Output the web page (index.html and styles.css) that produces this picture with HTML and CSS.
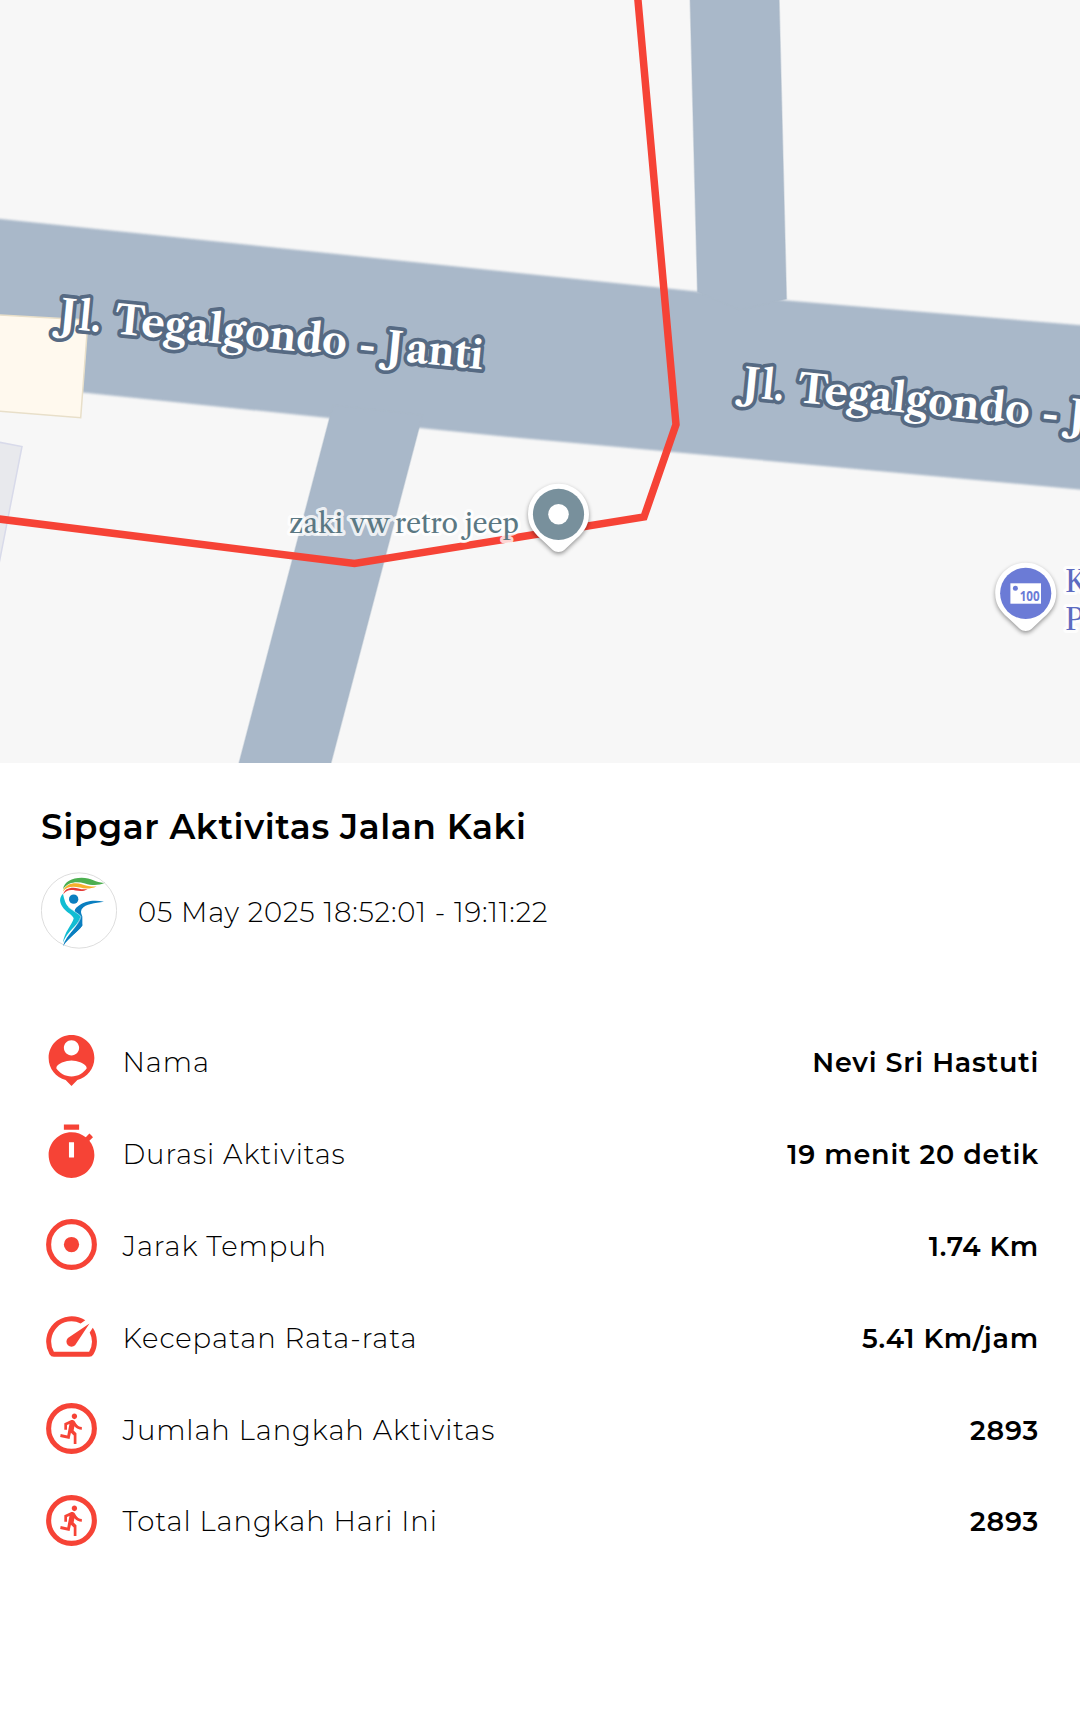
FILE: index.html
```html
<!DOCTYPE html>
<html lang="id">
<head>
    <meta charset="UTF-8">
    <meta name="viewport" content="width=device-width, initial-scale=1.0">
    <title>Sipgar Aktivitas Jalan Kaki</title>
    <link rel="stylesheet" href="styles.css">
</head>
<body>
    <svg class="map" viewBox="0 0 1080 763" width="1080" height="763">
        <defs>
            <g id="streetName">
                <text class="street" transform="rotate(5.6)"><tspan x="-1">J</tspan><tspan x="18" textLength="22" lengthAdjust="spacingAndGlyphs">l.</tspan> <tspan x="54" textLength="233" lengthAdjust="spacingAndGlyphs">Tegalgondo</tspan> <tspan x="299">-</tspan> <tspan x="327">J</tspan><tspan x="347" textLength="77" lengthAdjust="spacingAndGlyphs">anti</tspan></text>
            </g>
            <path id="pin" d="M0 -30.5C-17 -30.5 -30.5 -17 -30.5 0C-30.5 13 -23 20 -15 27L-6 35.5C-2.5 38.5 2.5 38.5 6 35.5L15 27C23 20 30.5 13 30.5 0C30.5 -17 17 -30.5 0 -30.5Z"/>
        </defs>

        <!-- Jalan -->
        <path class="road-edge" d="M-10 218L697 291.5L787 300.5L1090 326V490.5L520 438L420 428L329 418L-10 383Z"/>
        <path class="road" d="M690 -5L697.5 292L740 310L786.5 299L779 -5Z"/>
        <path class="road" d="M333 405L239 763H331L422.5 415Z"/>

        <!-- Bangunan -->
        <path class="building" d="M-2 315L88 320L80.7 417.7L-2 411Z"/>
        <path class="building-grey" d="M-2 442L22 446.5L-2 569Z"/>

        <!-- Rute -->
        <polyline class="route" points="-5,518.5 354.5,563.5 644,517 676,424.5 637.5,-5"/>

        <use href="#streetName" x="60" y="328"/>
        <use href="#streetName" x="743" y="396.7"/>

        <text class="poi" y="532.5"><tspan x="289" textLength="54" lengthAdjust="spacingAndGlyphs">zaki</tspan> <tspan x="350" textLength="39" lengthAdjust="spacingAndGlyphs">vw</tspan> <tspan x="395" textLength="63" lengthAdjust="spacingAndGlyphs">retro</tspan> <tspan x="465" textLength="54" lengthAdjust="spacingAndGlyphs">jeep</tspan></text>
        <g transform="translate(558.5 514.3)">
            <use href="#pin" class="pin"/>
            <circle r="25.6" fill="#78909c"/>
            <circle r="10.3" fill="#fff"/>
        </g>

        <g transform="translate(1025.7 593.3)">
            <use href="#pin" class="pin"/>
            <circle r="25.6" fill="#6b7bd6"/>
            <rect x="-15.3" y="-10" width="30.6" height="20.4" fill="#fff"/>
            <circle cx="-10.3" cy="-5" r="2.5" fill="#6b7bd6"/>
            <text class="money" x="-6" y="8" textLength="20" lengthAdjust="spacingAndGlyphs">100</text>
        </g>
        <text class="poi poi-blue" x="1065" y="592">K</text>
        <text class="poi poi-blue" x="1065" y="630">P</text>
    </svg>

    <div class="container">
        <h2>Sipgar Aktivitas Jalan Kaki</h2>
        <div class="info">
            <svg class="avatar" viewBox="18 21 228 230">
                <circle cx="132" cy="136" r="113" fill="#fff" stroke="#ccc" stroke-width="2"/>
                <path fill="#4caf50" d="M84 72C88 50 110 38 140 38C170 38 185 55 210 53C190 62 170 61 150 55C125 48 100 50 84 72Z"/>
                <path fill="#f6b02c" d="M84 79C90 56 118 50 140 57C155 62 170 65 185 64C165 72 150 71 135 67C112 62 95 64 84 79Z"/>
                <path fill="#e53935" d="M85 87C88 70 110 64 130 70C140 73 148 73 158 72C145 79 135 78 122 76C105 73 95 74 85 87Z"/>
                <circle cx="116" cy="102" r="14" fill="#0a7fc0"/>
                <path fill="#0a7fc0" d="M207 110C178 102 148 108 132 121C121 128 117 135 120 141L137 154C134 180 104 203 84 243C94 219 126 204 142 181L142 154C139 145 136 141 140 132C153 116 179 114 207 110Z"/>
                <path fill="#0a7fc0" d="M137 150C130 187 94 205 84 243C104 214 126 204 142 181Z"/>
                <path fill="#12bdd3" d="M84 86C90 114 94 121 107 131C120 140 135 149 137 153C129 183 96 197 84 233C87 202 112 177 116 160C114 150 97 143 86 130C72 113 72 98 84 86Z"/>
                <path fill="none" stroke="#fff" stroke-width="1.5" d="M100 126C118 139 131 146 138 154C132 180 100 204 88 228"/>
            </svg>
            <span class="tanggal">05 May 2025 18:52:01 - 19:11:22</span>
        </div>

        <div class="detail">
            <div class="row">
                <svg class="icon" viewBox="0 0 24 24"><path d="M12 2c-4.97 0-9 4.03-9 9 0 4.17 2.84 7.67 6.69 8.69L12 22l2.31-2.31C18.16 18.67 21 15.17 21 11c0-4.97-4.03-9-9-9zm0 2c1.66 0 3 1.34 3 3s-1.34 3-3 3-3-1.34-3-3 1.34-3 3-3zm0 14.3c-2.5 0-4.71-1.28-6-3.22.03-1.99 4-3.08 6-3.08 1.99 0 5.97 1.09 6 3.08-1.29 1.94-3.5 3.22-6 3.22z"/></svg>
                <span class="label">Nama</span>
                <span class="value">Nevi Sri Hastuti</span>
            </div>
            <div class="row">
                <svg class="icon" viewBox="0 0 24 24"><path fill-rule="evenodd" d="M15 1H9v2h6V1zm-4 13h2V8h-2v6zm8.03-6.61l1.42-1.42c-.43-.51-.9-.99-1.41-1.41l-1.42 1.42C16.07 4.74 14.12 4 12 4c-4.97 0-9 4.03-9 9s4.02 9 9 9 9-4.03 9-9c0-2.12-.74-4.07-1.97-5.61z"/></svg>
                <span class="label">Durasi Aktivitas</span>
                <span class="value">19 menit 20 detik</span>
            </div>
            <div class="row">
                <svg class="icon" viewBox="0 0 24 24"><circle class="ring" cx="12" cy="12" r="9"/><circle cx="12" cy="12" r="3"/></svg>
                <span class="label">Jarak Tempuh</span>
                <span class="value">1.74 Km</span>
            </div>
            <div class="row">
                <svg class="icon" viewBox="0 0 24 24"><path d="M20.38 8.57l-1.23 1.85a8 8 0 0 1-.22 7.58H5.07A8 8 0 0 1 15.58 6.85l1.85-1.23A10 10 0 0 0 3.35 19a2 2 0 0 0 1.72 1h13.85a2 2 0 0 0 1.74-1 10 10 0 0 0-.27-10.44zm-9.79 6.84a2 2 0 0 0 2.83 0l5.66-8.49-8.49 5.66a2 2 0 0 0 0 2.83z"/></svg>
                <span class="label">Kecepatan Rata-rata</span>
                <span class="value">5.41 Km/jam</span>
            </div>
            <div class="row">
                <svg class="icon" viewBox="0 0 24 24"><circle class="ring" cx="12" cy="12" r="9"/><path id="lari" transform="translate(6 5.27) scale(.53 .558)" d="M13.49 5.48c1.1 0 2-.9 2-2s-.9-2-2-2-2 .9-2 2 .9 2 2 2zm-3.6 13.9l1-4.4 2.1 2v6h2v-7.5l-2.1-2 .6-3c1.3 1.5 3.3 2.5 5.5 2.5v-2c-1.9 0-3.5-1-4.3-2.4l-1-1.6c-.4-.6-1-1-1.7-1-.3 0-.5.1-.8.1l-5.2 2.2v4.7h2v-3.4l1.8-.7-1.6 8.1-4.9-1-.4 2 7 1.4z"/></svg>
                <span class="label">Jumlah Langkah Aktivitas</span>
                <span class="value">2893</span>
            </div>
            <div class="row">
                <svg class="icon" viewBox="0 0 24 24"><circle class="ring" cx="12" cy="12" r="9"/><use href="#lari"/></svg>
                <span class="label">Total Langkah Hari Ini</span>
                <span class="value">2893</span>
            </div>
        </div>
    </div>
</body>
</html>
```
FILE: styles.css
```css
body {
    margin: 0;
    background: #fff;
    color: #000;
    font-family: Montserrat, Inter, sans-serif;
}
/* Peta */
.map {
    display: block;
    background: #f7f7f7;
    overflow: hidden;
}
.road {
    fill: #a9b8c9;
    stroke: rgba(169, 184, 201, 0.4);
    stroke-width: 1.5;
}
.road-edge {
    fill: #a9b8c9;
    filter: blur(1.3px);
}
.building {
    fill: #fff9ee;
    stroke: #e8dfc9;
    stroke-width: 1.5;
}
.building-grey {
    fill: #e8e9ed;
    stroke: #d8daea;
    stroke-width: 1.5;
}
.route {
    fill: none;
    stroke: #f64336;
    stroke-width: 7.5;
}
.street {
    font-family: "Libre Caslon Text", "Libre Baskerville", "Liberation Serif", serif;
    font-size: 40px;
    font-weight: bold;
    fill: #fff;
    stroke: #566a83;
    stroke-width: 7.5px;
    stroke-linejoin: round;
    paint-order: stroke;
}
.poi {
    font-family: "Libre Caslon Text", "Libre Baskerville", "Liberation Serif", serif;
    font-size: 27.5px;
    fill: #5b7883;
    stroke: rgba(255, 255, 255, 0.8);
    stroke-width: 6px;
    stroke-linejoin: round;
    paint-order: stroke;
}
.poi-blue {
    font-size: 29px;
    fill: #5c6bc0;
}
.pin {
    fill: #fff;
    filter: drop-shadow(0 2px 2px rgba(0, 0, 0, 0.4));
}
.money {
    font-family: "Open Sans", sans-serif;
    font-size: 14.5px;
    font-weight: bold;
    fill: #6b7bd6;
}
/* Informasi */
.container {
    padding: 42px 41px 0;
}
h2 {
    margin: 0;
    font-size: 34.5px;
    font-weight: 600;
    line-height: 44px;
    letter-spacing: 0.6px;
    white-space: nowrap;
}
.info {
    display: flex;
    align-items: center;
    gap: 21px;
    margin-top: 23px;
}
.avatar {
    width: 76px;
    height: 77px;
}
.tanggal {
    font-size: 27.5px;
    font-weight: 300;
    letter-spacing: 0.85px;
    padding-top: 3px;
    white-space: nowrap;
}
.detail {
    margin-top: 66px;
}
.row {
    display: flex;
    align-items: center;
    height: 91.9px;
}
.icon {
    width: 61px;
    height: 61px;
    fill: #f64336;
}
.ring {
    fill: none;
    stroke: #f64336;
    stroke-width: 2;
}
.label {
    margin-left: 20.5px;
    padding-top: 2px;
    font-size: 27.5px;
    font-weight: 300;
    letter-spacing: 0.9px;
    white-space: nowrap;
}
.value {
    margin-left: auto;
    padding-top: 3px;
    font-size: 27px;
    font-weight: 600;
    letter-spacing: 0.8px;
    white-space: nowrap;
}
```
